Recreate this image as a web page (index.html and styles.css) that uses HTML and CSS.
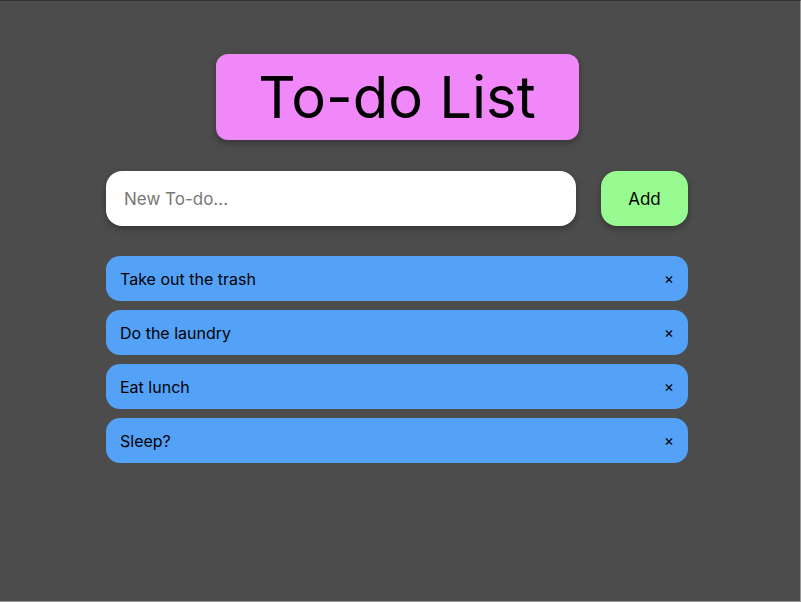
FILE: index.html
```html
<!DOCTYPE html>
<html>
<head>
<meta charset="utf-8">
<link rel="stylesheet" href="styles.css">
</head>
<body>
<div class="page">
  <div class="app">
    <h1 class="title">To-do List</h1>
    <div class="entry">
      <input class="new-todo" type="text" placeholder="New To-do...">
      <button class="add">Add</button>
    </div>
    <ul class="list">
      <li class="item"><span>Take out the trash</span><span class="del">×</span></li>
      <li class="item"><span>Do the laundry</span><span class="del">×</span></li>
      <li class="item"><span>Eat lunch</span><span class="del">×</span></li>
      <li class="item"><span>Sleep?</span><span class="del">×</span></li>
    </ul>
  </div>
</div>
</body>
</html>
```
FILE: styles.css
```css
html, body {
  margin: 0;
  padding: 0;
  height: 100%;
  background: #4c4c4c;
  font-family: Inter, "Noto Sans", sans-serif;
}
body {
  box-sizing: border-box;
  border-top: 1px solid #333;
  border-right: 1px solid #999;
  border-bottom: 1px solid #999;
  width: 801px;
  height: 602px;
  overflow: hidden;
}
.page {
  width: 794px;
  padding-top: 53px;
}
.app {
  width: 582px;
  margin: 0 auto;
  display: flex;
  flex-direction: column;
  align-items: center;
}
.title {
  margin: 0;
  width: 363px;
  height: 86px;
  box-sizing: border-box;
  background: #f088f9;
  border-radius: 12px;
  box-shadow: 0 3px 6px rgba(0,0,0,0.3);
  font-weight: 400;
  font-size: 58px;
  line-height: 86px;
  text-align: center;
  color: #000;
}
.entry {
  margin-top: 31px;
  width: 100%;
  display: flex;
  justify-content: space-between;
}
.new-todo {
  width: 470px;
  height: 55px;
  box-sizing: border-box;
  border: none;
  outline: none;
  border-radius: 16px;
  background: #fff;
  padding: 0 18px;
  font-family: inherit;
  font-size: 17px;
  box-shadow: 0 3px 6px rgba(0,0,0,0.3);
}
.new-todo::placeholder {
  color: #777;
}
.add {
  width: 87px;
  height: 55px;
  border: none;
  border-radius: 16px;
  background: #98fb91;
  font-family: inherit;
  font-size: 17px;
  color: #000;
  box-shadow: 0 3px 6px rgba(0,0,0,0.3);
}
.list {
  list-style: none;
  margin: 30px 0 0;
  padding: 0;
  width: 100%;
  display: flex;
  flex-direction: column;
  gap: 9px;
}
.item {
  height: 45px;
  box-sizing: border-box;
  background: #53a2f8;
  border-radius: 14px;
  padding: 0 14px 0 14px;
  display: flex;
  align-items: center;
  justify-content: space-between;
  font-size: 16px;
  color: #000;
}
.del {
  font-size: 15px;
}
```
